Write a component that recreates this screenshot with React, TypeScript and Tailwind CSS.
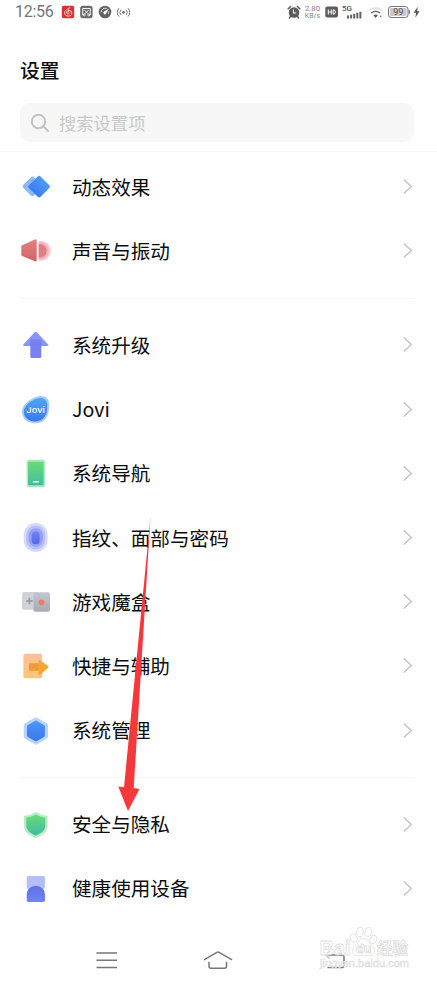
import type { ReactNode } from 'react';

type Item = { label: string; icon: ReactNode };

function Icon({ children }: { children: ReactNode }) {
  return (
    <svg className="w-8 h-8 flex-shrink-0" viewBox="0 0 32 32" fill="none">
      {children}
    </svg>
  );
}

function Gradient({ id, from, to }: { id: string; from: string; to: string }) {
  return (
    <defs>
      <linearGradient id={id} x1="0" y1="0" x2="0" y2="1">
        <stop offset="0" stopColor={from} />
        <stop offset="1" stopColor={to} />
      </linearGradient>
    </defs>
  );
}

const motionIcon = (
  <Icon>
    <Gradient id="motion" from="#4d9bf8" to="#3b7cf0" />
    <rect x="4.9" y="7.9" width="15" height="15" rx="2" transform="rotate(45 12.4 15.4)" fill="#8db8f8" />
    <rect x="10.9" y="7.4" width="16.4" height="16.4" rx="2" transform="rotate(45 19.1 15.6)" fill="url(#motion)" />
  </Icon>
);

const soundIcon = (
  <Icon>
    <Gradient id="sound" from="#e28280" to="#d2616a" />
    <path d="M18.7 6.2a9.9 9.9 0 0 1 12 9.6 9.9 9.9 0 0 1-12 9.6z" fill="#f6c9cb" />
    <path d="M18.7 7.7a8.3 8.3 0 0 1 9.8 8.1 8.3 8.3 0 0 1-9.8 8.1z" fill="#eeb0b3" />
    <path d="M18.7 9.4a6.5 6.5 0 0 1 7.9 6.4 6.5 6.5 0 0 1-7.9 6.4z" fill="#df7f83" />
    <path d="M2.7 10 15 4.5q1.7-.6 1.7 1V25q0 1.900-1.700 1.200L2.700 21.300q-1.400-.5-1.400-1.500v-8.300q0-1.100 1.400-1.500z" fill="url(#sound)" />
  </Icon>
);

const upgradeIcon = (
  <Icon>
    <Gradient id="upgrade" from="#7b80ee" to="#6474ee" />
    <rect x="10.300" y="11" width="11" height="18" rx="1.500" fill="#7782f0" />
    <path d="M14.700 3.200q1.100-1 2.200 0L28 15.500q.8 1.400-.8 1.500H4.200q-1.600-.1-.8-1.500z" fill="#8795f5" />
    <path d="M10.300 17V10h11v7z" fill="url(#upgrade)" opacity=".75" />
  </Icon>
);

const joviIcon = (
  <Icon>
    <Gradient id="jovi" from="#50a6f6" to="#3b78ee" />
    <path d="M2 17C2.500 9 14 2 21.500 2 26.500 2 29.200 5.500 29.200 11.500 29.200 22 25 29.300 15 29.300 7 29.300 1.600 24 2 17z" fill="#a4cbfa" />
    <path d="M3.800 17.200C4.300 10.500 14 4 21 4 25.300 4 27.300 7 27.300 12 27.300 21 23.500 27.400 15.200 27.400 8.300 27.400 3.500 23 3.800 17.200z" fill="url(#jovi)" />
    <text x="15.600" y="19.300" textAnchor="middle" textLength="18.500" lengthAdjust="spacingAndGlyphs" fill="#fff" className="font-['Inter'] text-[7.500px] font-medium">
      Jovi
    </text>
  </Icon>
);

const navigationIcon = (
  <Icon>
    <Gradient id="navigation" from="#6bdb78" to="#43bba0" />
    <rect x="6.700" y="1.700" width="18.300" height="27.500" rx="2" fill="#a8ebb8" />
    <rect x="8.100" y="3.700" width="15.400" height="23.500" rx="1.300" fill="url(#navigation)" />
    <rect x="12.700" y="22.900" width="6.300" height="1.700" rx=".8" fill="#fff" />
  </Icon>
);

const fingerprintIcon = (
  <Icon>
    <Gradient id="fingerprint" from="#7283f2" to="#5668e8" />
    <rect x="3.800" y=".9" width="23.800" height="29.200" rx="11.900" fill="#d5dafc" />
    <rect x="6.200" y="3.600" width="19" height="24" rx="9.500" fill="#b7c0f9" />
    <rect x="8.600" y="6.300" width="14.200" height="18.600" rx="7.100" fill="#93a0f6" />
    <rect x="11.700" y="9.400" width="8" height="12.800" rx="4" fill="url(#fingerprint)" />
  </Icon>
);

const gameIcon = (
  <Icon>
    <Gradient id="game" from="#c5c7cf" to="#a8aab3" />
    <rect x="2" y="6" width="17" height="17.800" rx="2" fill="#d0d2d8" />
    <path d="M9.400 11.800v6.400M6.200 15h6.400" stroke="#9c9ea8" strokeWidth="1.800" />
    <rect x="13.500" y="6.200" width="16.500" height="19.600" rx="2" fill="url(#game)" />
    <circle cx="21.500" cy="16.300" r="2.900" fill="#ef7a68" />
  </Icon>
);

const shortcutIcon = (
  <Icon>
    <Gradient id="shortcut" from="#fbc09a" to="#fbc57a" />
    <Gradient id="shortcutArrow" from="#f7a63e" to="#fba627" />
    <rect x="3.400" y="3.700" width="18.700" height="24.600" rx="2" fill="url(#shortcut)" />
    <path d="M9 13.300h9.500v-2.500q.2-1.500 1.500-.6l8.200 5.800q1 .9 0 1.700L20 24.700q-1.300.9-1.500-.6v-3.400H9z" fill="url(#shortcutArrow)" />
    <path d="M9 13.300h9.500v7.400H9z" fill="#e9953a" opacity=".55" />
  </Icon>
);

const systemIcon = (
  <Icon>
    <Gradient id="system" from="#4a99f6" to="#3c76ee" />
    <path d="M14.700 2.700q1.200-.7 2.400 0l9.700 5.500q1.200.7 1.200 2.100v11.200q0 1.400-1.200 2.100l-9.700 5.700q-1.200.7-2.400 0L5 23.600q-1.200-.7-1.200-2.100V10.300q0-1.400 1.200-2.100z" fill="#b9d4fb" />
    <path d="M14.900 5.900q1-.6 2 0l7 4q1 .6 1 1.800v8.500q0 1.200-1 1.800l-7 4q-1 .6-2 0l-7-4q-1-.6-1-1.800v-8.500q0-1.200 1-1.800z" fill="url(#system)" />
  </Icon>
);

const privacyIcon = (
  <Icon>
    <Gradient id="privacy" from="#69dc76" to="#41b9a6" />
    <path d="M15.800 3q5 3.100 11.800 4.100v9.700c0 6.500-6 10-11.800 12.400C10 26.800 4 23.300 4 16.800V7.100Q10.800 6.100 15.800 3z" fill="#b5edc4" />
    <path d="M15.800 5.600q4.100 2.300 9.500 3.200v7.700c0 5-4.500 8-9.500 10.100-5-2.100-9.500-5.100-9.500-10.100V8.800q5.400-.9 9.500-3.200z" fill="url(#privacy)" />
  </Icon>
);

const healthIcon = (
  <Icon>
    <Gradient id="health" from="#5f72e6" to="#7184f2" />
    <path d="M8.500 3h14.700q1.800 0 1.800 1.800v8.400q-.2 2.300-2.300 4.300H9q-2.100-2-2.300-4.300V4.800Q6.700 3 8.500 3z" fill="#b4bef9" />
    <path d="M6.700 21.500a9.150 8.700 0 0 1 18.300 0v5.700q0 1.800-1.800 1.800H8.500q-1.800 0-1.800-1.800z" fill="url(#health)" />
  </Icon>
);

const groups: Item[][] = [
  [
    { label: '动态效果', icon: motionIcon },
    { label: '声音与振动', icon: soundIcon },
  ],
  [
    { label: '系统升级', icon: upgradeIcon },
    { label: 'Jovi', icon: joviIcon },
    { label: '系统导航', icon: navigationIcon },
    { label: '指纹、面部与密码', icon: fingerprintIcon },
    { label: '游戏魔盒', icon: gameIcon },
    { label: '快捷与辅助', icon: shortcutIcon },
    { label: '系统管理', icon: systemIcon },
  ],
  [
    { label: '安全与隐私', icon: privacyIcon },
    { label: '健康使用设备', icon: healthIcon },
  ],
];

function StatusBar() {
  return (
    <header className="flex h-6 items-center justify-between px-[15px] text-[#757575]">
      <div className="flex items-center">
        <span className="w-[46px] font-['Roboto',sans-serif] text-[16px] leading-6 tracking-[-0.3px]">12:56</span>
        <svg className="h-[14px] w-[70px]" viewBox="0 0 70 14" fill="none">
          {/* 音乐 */}
          <rect x=".8" y=".8" width="12.400" height="12.400" rx="2" fill="#dd3035" />
          <path d="M8.900 2.800c-1.300-.3-2 .5-1.700 1.500l.7 3.200c.2 1.700-2 1.900-2.200.4-.2-1.700 1.300-2.800 3-2.500 3.200.7 2.700 5.500-1.300 5.700-4 .1-5.200-4.500-2-6.300" stroke="#fff" strokeWidth=".8" strokeLinecap="round" />
          {/* 截图 */}
          <rect x="19.200" y=".8" width="12.400" height="12.400" rx="2.500" fill="#6b6b6b" />
          <path d="M23 10H21.700V3.500h7.600V10H28M23.200 4.800l4.500 4.500M27.800 4.800l-4.500 4.500" stroke="#fff" strokeWidth=".9" />
          <circle cx="23.300" cy="9.900" r="1" stroke="#fff" strokeWidth=".7" />
          <circle cx="27.700" cy="9.900" r="1" stroke="#fff" strokeWidth=".7" />
          {/* 加速 */}
          <circle cx="44" cy="7" r="6.300" fill="#626262" />
          <path d="M40.200 7.200A3.900 3.900 0 0 1 45.500 3.500M47.800 6.500a4 4 0 0 1-.5 2.300" stroke="#fff" strokeWidth=".9" />
          <path d="M48 3.500 45 8.500a1.400 1.400 0 1 1-1.900-1.900z" fill="#fff" />
          {/* 热点 */}
          <circle cx="62.500" cy="7.400" r="1.300" fill="#666" />
          <path d="M60 4.700a3.900 3.900 0 0 0 0 5.400M65 4.700a3.900 3.900 0 0 1 0 5.400M58 3.200a6.200 6.200 0 0 0 0 8.400M67 3.200a6.200 6.200 0 0 1 0 8.400" stroke="#777" strokeWidth="1" />
        </svg>
      </div>

      <div className="flex items-center font-['Roboto',sans-serif]">
        <svg className="h-[14px] w-[14px]" viewBox="0 0 14 14" fill="none">
          <circle cx="7" cy="7.500" r="5.300" fill="#5c5c5c" />
          <path d="M1.200 3.800 3.600 1.500M12.800 3.800 10.400 1.500M3.500 11.500 2.400 13M10.500 11.500l1.100 1.500" stroke="#5c5c5c" strokeWidth="1.500" strokeLinecap="round" />
          <path d="M6.500 4.500V8H9.300" stroke="#fff" strokeWidth="1.100" />
        </svg>
        <div className="ml-[3px] flex w-[17px] flex-col items-center text-[#888]">
          <span className="h-[7px] text-[8px] leading-[7px]">2.80</span>
          <span className="mt-px h-[6px] text-[7px] leading-[6px]">KB/s</span>
        </div>
        <svg className="ml-[4px] h-[14px] w-[97px]" viewBox="0 0 97 14" fill="none">
          {/* HD */}
          <rect x=".3" y="1.500" width="12.700" height="11" rx="2" fill="#5c5c5c" />
          <path d="M3.300 4.400v5.200M6.300 4.400v5.200M3.300 7H6.300M8.100 4.900v4.200h.9q1.300-.2 1.300-2.100t-1.300-2.100z" stroke="#fff" strokeWidth="1" />
          {/* 信号 */}
          <text x="17" y="6.300" fill="#555" className="text-[8px] font-medium">5G</text>
          <path d="M23 10.500v3M26.100 9.800v3.700M29.200 8.800v4.700M32.300 7.800v5.700M35.400 6.700v6.800" stroke="#626262" strokeWidth="2" />
          {/* Wi-Fi */}
          <path d="M43.800 5.500a10.500 10.500 0 0 1 13.700 0" stroke="#ddd" strokeWidth="1.500" />
          <path d="M46.300 8.100a6.900 6.900 0 0 1 8.700 0" stroke="#777" strokeWidth="1.500" />
          <path d="M48.300 10.300q2.300-1.600 4.600 0L50.600 13z" fill="#606060" />
          <circle cx="55.700" cy="11.300" r=".9" fill="#777" />
          {/* 电池 */}
          <rect x="63.500" y="1.500" width="19.500" height="11" rx="2.500" stroke="#777" />
          <rect x="65" y="3" width="16.500" height="8" rx="1" fill="#c9c9c9" />
          <path d="M84.300 5v4" stroke="#777" strokeWidth="1.200" />
          <text x="73.200" y="10.200" textAnchor="middle" fill="#555" className="text-[9px]">99</text>
          <path d="m92.800 1.800-4.200 6h2.500l-.7 4.600 4.200-6.200h-2.500z" fill="#555" />
        </svg>
      </div>
    </header>
  );
}

function Row({ label, icon }: Item) {
  return (
    <li className="flex h-[64.200px] items-center pl-5 pr-[24px]">
      {icon}
      <span className="ml-5 flex-1 pb-px font-['Noto_Sans_CJK_SC',sans-serif] text-[19.600px] leading-7 text-[#0c0c0c]">{label}</span>
      <svg className="h-4 w-[11px]" viewBox="0 0 11 16" fill="none">
        <path d="m1.800 .5 7.500 7-7.500 7" stroke="#c6c6c6" strokeWidth="1.500" />
      </svg>
    </li>
  );
}

function NavBar() {
  return (
    <nav className="mt-[24px] flex h-8 items-center pl-[92px] text-[#777]">
      <svg className="h-6 w-[30px]" viewBox="0 0 30 24" fill="none" stroke="currentColor" strokeWidth="1.500">
        <path d="M4.500 4h20.500M4.500 11.300h20.500M4.500 18.500h20.500" />
      </svg>
      <svg className="ml-[80px] h-6 w-8" viewBox="0 0 32 24" fill="none" stroke="currentColor" strokeWidth="1.500" strokeLinejoin="round">
        <path d="M2 10.900 14.800 3.400q1.200-.6 2.400 0L30 10.900M7 12.700v4.500q0 2 2 2h13.500q2 0 2-2v-4.500" />
      </svg>
      <svg className="ml-[86px] h-6 w-[30px]" viewBox="0 0 30 24" fill="none" stroke="currentColor" strokeWidth="1.500">
        <path d="M6 6h16q2 0 2 2v8.500q0 2-2 2H7.500" />
        <path d="M9.500 2.500 6 6l3.500 3.500" stroke="#c5c5c5" />
      </svg>
    </nav>
  );
}

function Watermark() {
  return (
    <svg className="absolute left-[316px] top-[922px] h-[54px] w-[100px]" viewBox="0 0 100 54">
      <g fill="#fff" fillOpacity=".8" stroke="#dedede" strokeWidth=".8" className="font-['Liberation_Sans','Noto_Sans_CJK_SC',sans-serif] font-bold">
        <text x="3.500" y="33" textLength="31" lengthAdjust="spacingAndGlyphs" className="text-[21px]">Bai</text>
        <ellipse cx="37.700" cy="16" rx="3.300" ry="4.300" transform="rotate(-20 37.700 16)" />
        <ellipse cx="44" cy="10" rx="3.300" ry="4.600" />
        <ellipse cx="52.300" cy="10" rx="3.300" ry="4.600" transform="rotate(15 52.300 10)" />
        <ellipse cx="57.300" cy="17.500" rx="3.300" ry="4.300" transform="rotate(25 57.300 17.500)" />
        <path d="M47.500 16.300c-4.500 0-5 4.500-8.500 7.600-4.500 4-2.200 10.400 3 9.800 3.700-.4 7.300-.4 11 0 5.200.6 7.500-5.800 3.200-9.800-3.500-3.100-4.200-7.600-8.700-7.600z" />
        <text x="40" y="31" textLength="15.500" lengthAdjust="spacingAndGlyphs" className="text-[12px]">du</text>
        <text x="61" y="32" className="text-[15.500px]">经验</text>
      </g>
      <text x="4" y="45" textLength="89" lengthAdjust="spacingAndGlyphs" fill="#fff" stroke="#dedede" strokeWidth=".6" className="font-['Liberation_Sans',sans-serif] text-[10.500px]">
        jingyan.baidu.com
      </text>
    </svg>
  );
}

export default function App() {
  return (
    <div className="relative h-[981px] w-[437px] overflow-hidden bg-[#fefefe] font-['Roboto','Noto_Sans_CJK_SC',sans-serif]">
      <StatusBar />

      <h1 className="mt-[33px] pl-5 text-[19.800px] font-medium leading-[30px] text-[#111]">设置</h1>

      {/* 搜索框 */}
      <div className="ml-5 mr-[23px] mt-4 flex h-[39px] items-center rounded-[10px] bg-[#f7f7f7] pl-[10px]">
        <svg className="h-5 w-5" viewBox="0 0 20 20" fill="none" stroke="#c4c4c4" strokeWidth="2">
          <circle cx="8.500" cy="8.500" r="6.700" />
          <path d="m13.300 13.300 4.700 4.700" strokeLinecap="round" />
        </svg>
        <span className="ml-[9px] pt-[2px] text-[17.300px] leading-6 text-[#cacaca]">搜索设置项</span>
      </div>

      {/* 设置列表 */}
      <main className="mt-[9px] border-t border-[#f8f8f8] pt-[3px]">
        {groups.map((items, index) => (
          <section key={items[0].label}>
            {index > 0 && <div className="ml-5 mr-[23px] my-[14.500px] h-px bg-[#f7f7f7]" />}
            <ul>
              {items.map((item) => (
                <Row key={item.label} {...item} />
              ))}
            </ul>
          </section>
        ))}
      </main>

      <NavBar />

      {/* 指向「安全与隐私」的箭头 */}
      <svg className="absolute left-[110px] top-[510px] h-[305px] w-[50px]" viewBox="0 0 50 305">
        <path d="M40.500 7 23.700 278l5.800 1L18 301 8.300 276.500l5.700.7z" fill="#f5383c" />
      </svg>

      <Watermark />
    </div>
  );
}
